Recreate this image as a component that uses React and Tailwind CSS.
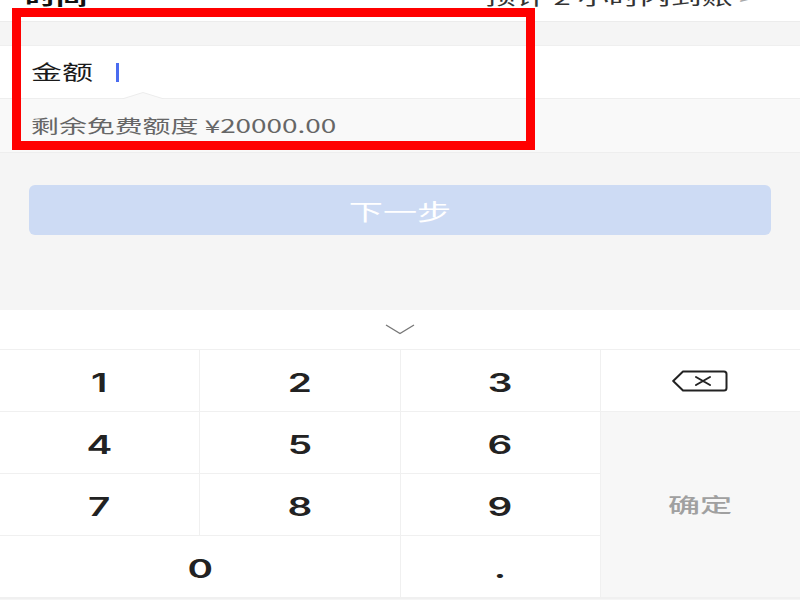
import { useState } from "react";

const cjk = "font-['Noto_Sans_CJK_SC','Noto_Sans',sans-serif]";
const num = "font-['Inter','Noto_Sans_CJK_SC',sans-serif]";

// the reference is a phone capture stretched sideways, so text is widened
const wide = "inline-block scale-x-[1.55]";

function BackspaceIcon() {
  return (
    <svg width="56" height="22" viewBox="0 0 56 22" fill="none">
      <path
        d="M11 1.5H52Q54.5 1.5 54.5 4V18Q54.5 20.5 52 20.5H11L1.2 11Z"
        stroke="#222"
        strokeWidth="2"
        strokeLinejoin="round"
      />
      <path d="M24 7L38 15M38 7L24 15" stroke="#222" strokeWidth="2" strokeLinecap="round" />
    </svg>
  );
}

function Key({ children, className = "", onClick }) {
  return (
    <button
      onClick={onClick}
      className={`h-[61px] pt-[7px] bg-white flex items-center justify-center text-[25px] font-semibold text-[#222] ${num} ${className}`}
    >
      {children}
    </button>
  );
}

export default function App() {
  const [amount, setAmount] = useState("");

  const press = (k) => setAmount((prev) => prev + k);

  return (
    <div className={`relative w-[800px] h-[600px] overflow-hidden bg-[#f5f5f5] ${cjk}`}>
      {/* header row, mostly scrolled off the top */}
      <div className="-mt-[28px] h-[50px] bg-white border-b border-[#ececec] flex items-center justify-between pl-[25px] pr-[44px]">
        <span className={`${wide} origin-left text-[20px] font-bold text-[#111]`}>时间</span>
        <span className={`${wide} origin-right text-[20px] text-[#333]`}>
          预计 2 小时内到账<span className="ml-1 text-[#aaa]">&gt;</span>
        </span>
      </div>

      <div className="h-[23px]" />

      {/* amount input */}
      <div className="h-[53px] bg-white border-t border-[#efefef] flex items-center pl-[31px]">
        <span className={`${wide} origin-left text-[20px] text-[#1a1a1a]`}>金额</span>
        <span className="ml-[45px] text-[20px] text-[#222]">{amount}</span>
        <span className="w-[3px] h-[19px] bg-[#4a6cf0]" />
      </div>

      <div className="relative h-[55px] bg-[#f9f9f9] border-t border-b border-[#eeeeee] flex items-center pl-[31px]">
        <svg className="absolute left-[122px] -top-[7px]" width="42" height="7" viewBox="0 0 42 7">
          <path d="M0 7L21 0.5L42 7" fill="#f9f9f9" stroke="#ececec" />
        </svg>
        <span className={`${wide} origin-left text-[18px] text-[#666]`}>剩余免费额度 ¥20000.00</span>
      </div>

      {/* next button */}
      <div className="h-[157px] pt-[32px] px-[29px]">
        <button className="w-full h-[50px] rounded-md bg-[#cddbf4] text-white text-[22px] flex items-center justify-center">
          <span className={wide}>下一步</span>
        </button>
      </div>

      {/* keyboard */}
      <div className="bg-white">
        <div className="h-[40px] flex items-center justify-center border-b border-[#f0f0f0]">
          <svg width="30" height="11" viewBox="0 0 30 11" fill="none">
            <path d="M1 1L15 9.5L29 1" stroke="#777" strokeWidth="1.4" />
          </svg>
        </div>
        <div className="grid grid-cols-4 gap-px bg-[#f0f0f0] pb-[2px]">
          {["1", "2", "3"].map((k) => (
            <Key key={k} onClick={() => press(k)}>
              <span className={wide}>{k}</span>
            </Key>
          ))}
          <Key className="!pt-0" onClick={() => setAmount((prev) => prev.slice(0, -1))}>
            <BackspaceIcon />
          </Key>
          {["4", "5", "6"].map((k) => (
            <Key key={k} onClick={() => press(k)}>
              <span className={wide}>{k}</span>
            </Key>
          ))}
          <button className={`row-span-3 bg-[#f7f7f7] flex items-center justify-center text-[20px] font-medium text-[#a0a0a0] ${cjk}`}>
            <span className="inline-block scale-x-[1.6]">确定</span>
          </button>
          {["7", "8", "9"].map((k) => (
            <Key key={k} onClick={() => press(k)}>
              <span className={wide}>{k}</span>
            </Key>
          ))}
          <Key className="col-span-2" onClick={() => press("0")}>
            <span className={wide}>0</span>
          </Key>
          <Key onClick={() => press(".")}>
            <span className={wide}>.</span>
          </Key>
        </div>
      </div>

      {/* red annotation frame */}
      <div className="absolute left-[12px] top-[8px] w-[523px] h-[142px] border-[9px] border-[#ff0000]" />
    </div>
  );
}
